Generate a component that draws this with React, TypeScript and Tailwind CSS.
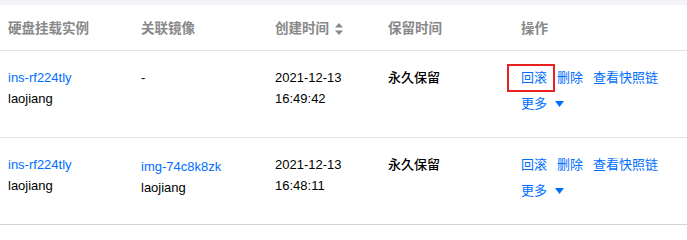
import { ReactNode } from 'react';

const COLS = 'grid grid-cols-[133px_134px_113px_133px_1fr]';
const FONT = { fontFamily: '"Liberation Sans", "Noto Sans CJK SC", sans-serif' };

const ROWS = [
  { instance: 'ins-rf224tly', owner: 'laojiang', image: null as string | null, date: '2021-12-13', time: '16:49:42', keep: '永久保留', marked: true },
  { instance: 'ins-rf224tly', owner: 'laojiang', image: 'img-74c8k8zk', date: '2021-12-13', time: '16:48:11', keep: '永久保留', marked: false },
];

function SortIcon() {
  return (
    <svg width="8" height="12" viewBox="0 0 8 12" className="ml-[6px] inline-block">
      <path d="M4 0 L8 4.5 L0 4.5 Z" fill="#888" />
      <path d="M4 12 L8 7.5 L0 7.5 Z" fill="#888" />
    </svg>
  );
}

function Th({ children }: { children: ReactNode }) {
  return <div className="flex items-center pl-2 pt-[3px] text-[13.5px] font-semibold text-[#888]">{children}</div>;
}

export default function App() {
  return (
    <div className="w-[687px] h-[226px] bg-white text-[13px] overflow-hidden" style={FONT}>
      <div className="h-[5px] bg-[#f3f4f7]" />
      <div className={`${COLS} h-[46px] border-b border-[#dfe2ea]`}>
        <Th>硬盘挂载实例</Th>
        <Th>关联镜像</Th>
        <Th>创建时间 <SortIcon /></Th>
        <Th>保留时间</Th>
        <Th>操作</Th>
      </div>

      {ROWS.map((r, i) => (
        <div key={i} className={`${COLS} h-[87px] border-b ${i === ROWS.length - 1 ? 'border-[#d4d4d4]' : 'border-[#e5e5e5]'}`}>
          <div className="pl-2 pt-4 leading-[21px]">
            <div className="text-[#006eff]">{r.instance}</div>
            <div className="text-black">{r.owner}</div>
          </div>
          <div className={`pl-2 leading-[21px] ${r.image ? 'pt-[18px]' : 'pt-4'}`}>
            {r.image ? (
              <>
                <div className="text-[#006eff]">{r.image}</div>
                <div className="text-black">{r.owner}</div>
              </>
            ) : (
              <div className="text-black">-</div>
            )}
          </div>
          <div className="pl-2 pt-4 leading-[21px] text-black">
            <div>{r.date}</div>
            <div>{r.time}</div>
          </div>
          <div className="pl-2 pt-4 leading-[21px] font-medium text-black">{r.keep}</div>
          <div className="pl-2 pt-[14px] leading-[26px] text-[#006eff]">
            <div className="flex gap-[10px]">
              <span className="relative">
                回滚
                {r.marked && (
                  <span className="absolute left-[-14px] top-[-1px] h-[28px] w-[48px] border-2 border-[#e8231f]" />
                )}
              </span>
              <span>删除</span>
              <span>查看快照链</span>
            </div>
            <div className="flex items-center">
              更多
              <svg width="9" height="6" viewBox="0 0 9 6" className="ml-[8px]">
                <path d="M0 0 L9 0 L4.5 6 Z" fill="#006eff" />
              </svg>
            </div>
          </div>
        </div>
      ))}
    </div>
  );
}
